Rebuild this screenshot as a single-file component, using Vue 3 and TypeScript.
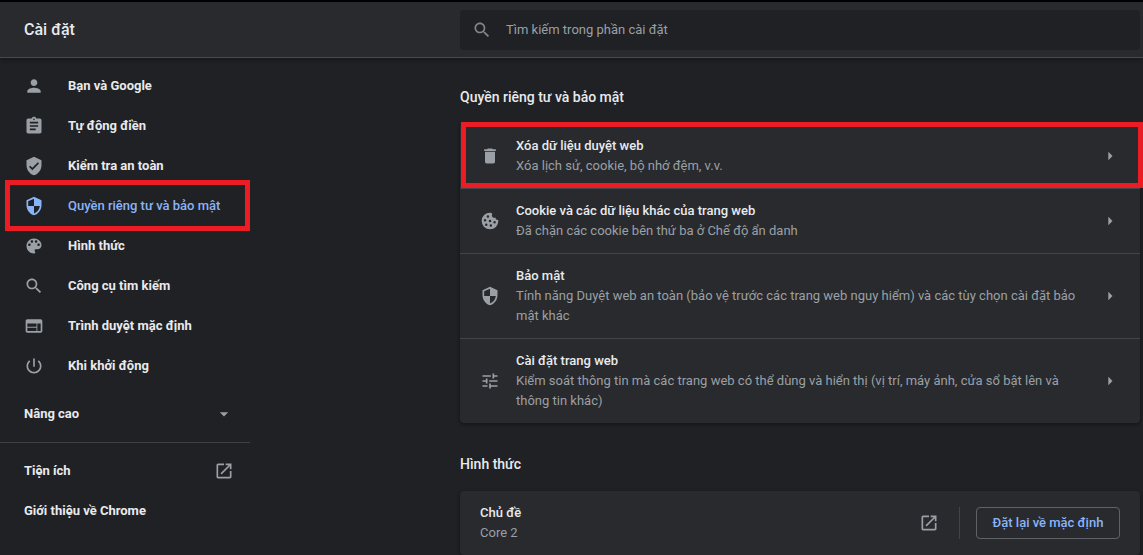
<script setup lang="ts">
import { ref } from 'vue'

interface NavItem {
  label: string
  icon: string
  active?: boolean
}

interface SettingRow {
  title: string
  detail: string
  icon: string
  marked?: boolean
}

const icons: Record<string, string> = {
  person:
    'M12 12c2.21 0 4-1.79 4-4s-1.79-4-4-4-4 1.79-4 4 1.79 4 4 4zm0 2c-2.67 0-8 1.34-8 4v2h16v-2c0-2.66-5.33-4-8-4z',
  assignment:
    'M19 3h-4.18C14.4 1.84 13.3 1 12 1c-1.3 0-2.4.84-2.82 2H5c-1.1 0-2 .9-2 2v14c0 1.1.9 2 2 2h14c1.1 0 2-.9 2-2V5c0-1.1-.9-2-2-2zm-7 0c.55 0 1 .45 1 1s-.45 1-1 1-1-.45-1-1 .45-1 1-1zm2 14H7v-2h7v2zm3-4H7v-2h10v2zm0-4H7V7h10v2z',
  verified:
    'M12 1L3 5v6c0 5.55 3.84 10.74 9 12 5.16-1.26 9-6.45 9-12V5l-9-4zm-2 16l-4-4 1.41-1.41L10 14.17l6.59-6.59L18 9l-8 8z',
  shield:
    'M12 1L3 5v6c0 5.55 3.84 10.74 9 12 5.16-1.26 9-6.45 9-12V5l-9-4zm0 10.99h7c-.53 4.12-3.28 7.79-7 8.94V12H5V6.3l7-3.11v8.8z',
  palette:
    'M12 3c-4.97 0-9 4.03-9 9s4.03 9 9 9c.83 0 1.5-.67 1.5-1.5 0-.39-.15-.74-.39-1.01-.23-.26-.38-.61-.38-.99 0-.83.67-1.5 1.5-1.5H16c2.76 0 5-2.24 5-5 0-4.42-4.03-8-9-8zm-5.5 9c-.83 0-1.5-.67-1.5-1.5S5.67 9 6.5 9 8 9.67 8 10.5 7.33 12 6.5 12zm3-4C8.67 8 8 7.33 8 6.5S8.67 5 9.5 5s1.5.67 1.5 1.5S10.33 8 9.5 8zm5 0c-.83 0-1.5-.67-1.5-1.5S13.67 5 14.5 5s1.5.67 1.5 1.5S15.33 8 14.5 8zm3 4c-.83 0-1.5-.67-1.5-1.5S16.67 9 17.5 9s1.5.67 1.5 1.5-.67 1.5-1.5 1.5z',
  search:
    'M15.5 14h-.79l-.28-.27C15.41 12.59 16 11.11 16 9.5 16 5.91 13.09 3 9.5 3S3 5.91 3 9.5 5.91 16 9.5 16c1.61 0 3.09-.59 4.23-1.57l.27.28v.79l5 4.99L20.49 19l-4.99-5zm-6 0C7.01 14 5 11.99 5 9.5S7.01 5 9.5 5 14 7.01 14 9.5 11.99 14 9.5 14z',
  web:
    'M20 4H4c-1.1 0-1.99.9-1.99 2L2 18c0 1.1.9 2 2 2h16c1.1 0 2-.9 2-2V6c0-1.1-.9-2-2-2zm-5 14H4v-4h11v4zm0-5H4V9h11v4zm5 5h-4V9h4v9z',
  power:
    'M13 3h-2v10h2V3zm4.83 2.17l-1.42 1.42C17.99 7.86 19 9.81 19 12c0 3.87-3.13 7-7 7s-7-3.13-7-7c0-2.19 1.01-4.14 2.58-5.42L6.17 5.17C4.23 6.82 3 9.26 3 12c0 4.97 4.03 9 9 9s9-4.03 9-9c0-2.74-1.23-5.18-3.17-6.83z',
  trash: 'M6 19c0 1.1.9 2 2 2h8c1.1 0 2-.9 2-2V7H6v12zM19 4h-3.5l-1-1h-5l-1 1H5v2h14V4z',
  cookie:
    'M12 2a10 10 0 1 0 10 10 8 8 0 0 1-.1-1.3 2.9 2.9 0 0 1-3.4-2.9 3 3 0 0 1-3.9-4.2A3 3 0 0 1 14.2 2.25 10 10 0 0 0 12 2zM9.5 5a1.5 1.5 0 1 1 0 3 1.5 1.5 0 0 1 0-3zM6 9.5a1.5 1.5 0 1 1 0 3 1.5 1.5 0 0 1 0-3zM12 10.5a1.5 1.5 0 1 1 0 3 1.5 1.5 0 0 1 0-3zM17.5 12a1.5 1.5 0 1 1 0 3 1.5 1.5 0 0 1 0-3zM7.5 15a1.5 1.5 0 1 1 0 3 1.5 1.5 0 0 1 0-3zM13 16a1.5 1.5 0 1 1 0 3 1.5 1.5 0 0 1 0-3z',
  tune:
    'M3 17v2h6v-2H3zM3 5v2h10V5H3zm10 16v-2h8v-2h-8v-2h-2v6h2zM7 9v2H3v2h4v2h2V9H7zm14 4v-2H11v2h10zm-6-4h2V7h4V5h-4V3h-2v6z',
  launch:
    'M19 19H5V5h7V3H5c-1.11 0-2 .9-2 2v14c0 1.1.89 2 2 2h14c1.1 0 2-.9 2-2v-7h-2v7zM14 3v2h3.59l-9.83 9.83 1.41 1.41L19 6.41V10h2V3h-7z',
  right: 'M10 7l5 5-5 5z',
  down: 'M7 10l5 5 5-5z',
}

const navItems: NavItem[] = [
  { label: 'Bạn và Google', icon: 'person' },
  { label: 'Tự động điền', icon: 'assignment' },
  { label: 'Kiểm tra an toàn', icon: 'verified' },
  { label: 'Quyền riêng tư và bảo mật', icon: 'shield', active: true },
  { label: 'Hình thức', icon: 'palette' },
  { label: 'Công cụ tìm kiếm', icon: 'search' },
  { label: 'Trình duyệt mặc định', icon: 'web' },
  { label: 'Khi khởi động', icon: 'power' },
]

const rows: SettingRow[] = [
  {
    title: 'Xóa dữ liệu duyệt web',
    detail: 'Xóa lịch sử, cookie, bộ nhớ đệm, v.v.',
    icon: 'trash',
    marked: true,
  },
  {
    title: 'Cookie và các dữ liệu khác của trang web',
    detail: 'Đã chặn các cookie bên thứ ba ở Chế độ ẩn danh',
    icon: 'cookie',
  },
  {
    title: 'Bảo mật',
    detail:
      'Tính năng Duyệt web an toàn (bảo vệ trước các trang web nguy hiểm) và các tùy chọn cài đặt bảo mật khác',
    icon: 'shield',
  },
  {
    title: 'Cài đặt trang web',
    detail:
      'Kiểm soát thông tin mà các trang web có thể dùng và hiển thị (vị trí, máy ảnh, cửa sổ bật lên và thông tin khác)',
    icon: 'tune',
  },
]

const query = ref('')
</script>

<template>
  <div class="page">
    <header class="topbar">
      <h1 class="brand">Cài đặt</h1>
      <label class="search">
        <svg class="icon search-icon" viewBox="0 0 24 24" aria-hidden="true"><path :d="icons.search" /></svg>
        <input
          v-model="query"
          class="search-input"
          type="text"
          aria-label="Tìm kiếm trong phần cài đặt"
          placeholder="Tìm kiếm trong phần cài đặt"
        />
      </label>
    </header>

    <div class="body">
      <nav class="sidebar">
        <a
          v-for="item in navItems"
          :key="item.label"
          href="#"
          class="nav-item"
          :class="{ active: item.active }"
        >
          <svg class="icon" viewBox="0 0 24 24" aria-hidden="true"><path :d="icons[item.icon]" /></svg>
          <span>{{ item.label }}</span>
        </a>
        <button type="button" class="advanced">
          <span>Nâng cao</span>
          <svg class="icon" viewBox="0 0 24 24" aria-hidden="true"><path :d="icons.down" /></svg>
        </button>
        <div class="nav-footer">
          <a href="#" class="nav-item spread">
            <span>Tiện ích</span>
            <svg class="icon" viewBox="0 0 24 24" aria-hidden="true"><path :d="icons.launch" /></svg>
          </a>
          <a href="#" class="nav-item">Giới thiệu về Chrome</a>
        </div>
      </nav>

      <main class="content">
        <section>
          <h2 class="heading">Quyền riêng tư và bảo mật</h2>
          <div class="card">
            <button
              v-for="row in rows"
              :key="row.title"
              type="button"
              class="row"
              :class="{ marked: row.marked }"
            >
              <svg class="icon" viewBox="0 0 24 24" aria-hidden="true"><path fill-rule="evenodd" :d="icons[row.icon]" /></svg>
              <span class="texts">
                <span class="title">{{ row.title }}</span>
                <span class="detail">{{ row.detail }}</span>
              </span>
              <svg class="icon" viewBox="0 0 24 24" aria-hidden="true"><path :d="icons.right" /></svg>
            </button>
          </div>
        </section>

        <section>
          <h2 class="heading">Hình thức</h2>
          <div class="card">
            <div class="row">
              <span class="texts">
                <span class="title">Chủ đề</span>
                <span class="detail">Core 2</span>
              </span>
              <a href="#" class="open-theme" aria-label="Chủ đề">
                <svg class="icon" viewBox="0 0 24 24" aria-hidden="true"><path :d="icons.launch" /></svg>
              </a>
              <span class="divider"></span>
              <button type="button" class="reset">Đặt lại về mặc định</button>
            </div>
          </div>
        </section>
      </main>
    </div>
  </div>
</template>

<style>
body {
  background: #202124;
}
</style>

<style scoped>
.page,
.page * {
  box-sizing: border-box;
}

.page {
  min-height: 100vh;
  background: #202124;
  border-top: 2px solid #000;
  color: #e8eaed;
  font-family: Roboto, 'Noto Sans', sans-serif;
  font-size: 13px;
  line-height: 20px;
}

button,
input {
  font: inherit;
  color: inherit;
  background: none;
  border: 0;
  margin: 0;
  padding: 0;
}

a {
  color: inherit;
  text-decoration: none;
}

.icon {
  flex: none;
  display: block;
  width: 20px;
  height: 20px;
  fill: #9aa0a6;
}

.topbar {
  position: relative;
  display: grid;
  grid-template-columns: 460px 1fr;
  align-items: center;
  height: 56px;
  padding-right: 3px;
  background: #292a2d;
  border-bottom: 1px solid #48494c;
  box-shadow: 0 2px 4px rgba(0, 0, 0, 0.3);
}

.brand {
  margin: 0;
  padding-left: 24px;
  font-size: 16px;
  font-weight: 500;
  line-height: 24px;
}

.search {
  display: flex;
  align-items: center;
  gap: 14px;
  height: 40px;
  padding: 0 12px;
  background: #202124;
  border-radius: 4px;
}

.search-icon {
  fill: #80868b;
}

.search-input {
  flex: 1;
  min-width: 0;
  height: 20px;
  outline: none;
}

.search-input::placeholder {
  color: #9aa0a6;
  opacity: 1;
}

.body {
  display: grid;
  grid-template-columns: 250px 1fr;
}

.sidebar {
  padding-top: 8px;
  font-weight: 700;
}

.nav-item {
  position: relative;
  display: flex;
  align-items: center;
  gap: 24px;
  height: 40px;
  padding: 0 16px 0 24px;
}

.nav-item.active {
  color: #8ab4f8;
  font-weight: 500;
}

.nav-item.active .icon {
  fill: #8ab4f8;
}

.nav-item.active::after {
  content: '';
  position: absolute;
  inset: -6px 0 -5px 5px;
  border: 5px solid #ec1c24;
}

.spread,
.advanced {
  justify-content: space-between;
}

.advanced {
  display: flex;
  align-items: center;
  width: 100%;
  height: 40px;
  margin: 8px 0;
  padding: 0 16px 0 24px;
  text-align: left;
  font-weight: 700;
}

.nav-footer {
  padding-top: 8px;
  border-top: 1px solid #3f4043;
}

.content {
  padding: 29px 3px 0 210px;
}

section + section {
  margin-top: 31px;
}

.heading {
  margin: 0 0 17px;
  font-size: 14px;
  font-weight: 500;
  line-height: 20px;
}

.card {
  background: #292a2d;
  border-radius: 4px;
  box-shadow: 0 1px 3px 1px rgba(0, 0, 0, 0.3);
}

.row {
  position: relative;
  display: flex;
  align-items: center;
  gap: 16px;
  width: 100%;
  padding: 12px 20px;
  text-align: left;
}

.row + .row {
  border-top: 1px solid #434447;
}

.row.marked::after {
  content: '';
  position: absolute;
  inset: -2px -3px 0 1px;
  border: 5px solid #ec1c24;
}

.texts {
  flex: 1;
  min-width: 0;
}

.title,
.detail {
  display: block;
}

.title {
  font-weight: 500;
}

.detail {
  color: #9aa0a6;
}

.divider {
  width: 1px;
  height: 32px;
  background: #434447;
}

.open-theme {
  padding-right: 4px;
}

.reset {
  min-width: 144px;
  height: 32px;
  padding: 0 15px;
  border: 1px solid #5f6368;
  border-radius: 4px;
  color: #8ab4f8;
  font-weight: 500;
}
</style>
